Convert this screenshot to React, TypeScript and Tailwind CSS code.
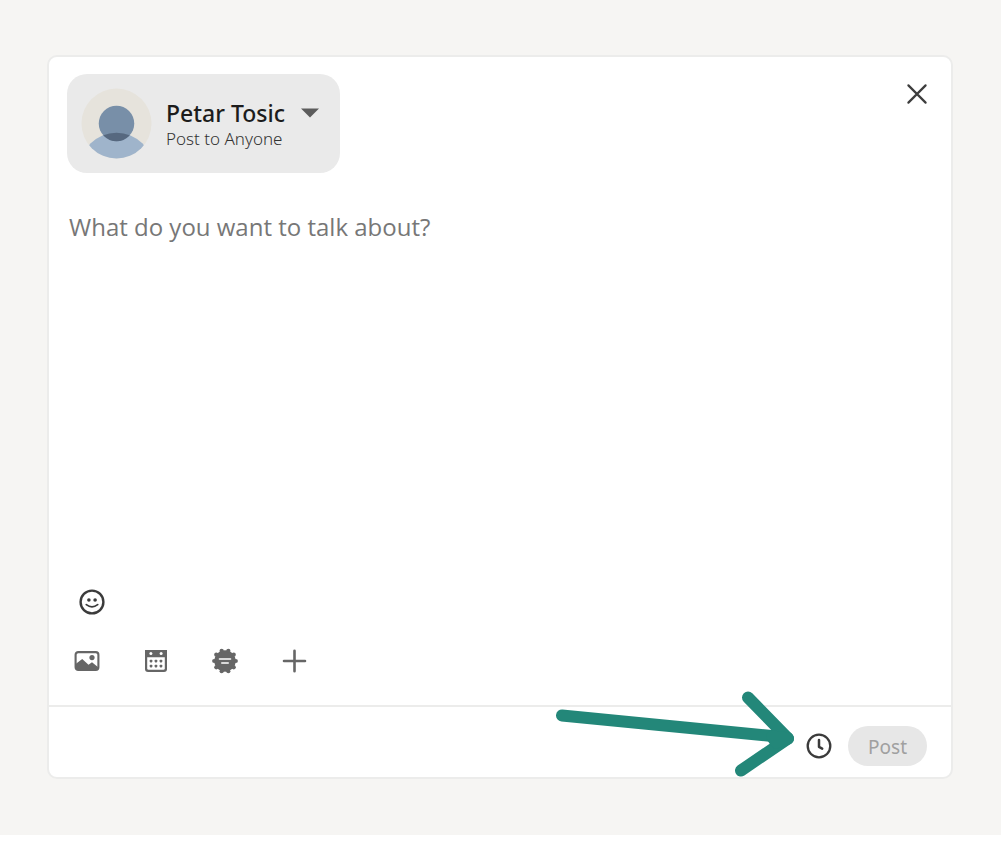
import { useState } from "react";

function Avatar() {
  return (
    <svg viewBox="0 0 70 70" className="size-[71px] shrink-0" aria-hidden="true">
      <defs>
        <clipPath id="avatar-round">
          <circle cx="35" cy="35" r="34.5" />
        </clipPath>
        <clipPath id="avatar-head">
          <circle cx="35" cy="35" r="17.5" />
        </clipPath>
      </defs>
      <g clipPath="url(#avatar-round)">
        <rect width="70" height="70" fill="#e6e3dc" />
        <circle cx="35" cy="80" r="36" fill="#9fb4cb" />
        <circle cx="35" cy="35" r="17.5" fill="#788fa8" />
        <circle cx="35" cy="80" r="36" fill="#56687f" clipPath="url(#avatar-head)" />
      </g>
    </svg>
  );
}

function SmileIcon() {
  return (
    <svg viewBox="0 0 26 26" className="size-[26px]" fill="none" stroke="#3b3b3b" aria-hidden="true">
      <circle cx="13" cy="13" r="11.4" strokeWidth="2.4" />
      <path d="M7.3 15.6q5.7 4.4 11.4 0" strokeWidth="1.7" strokeLinecap="round" />
      <circle cx="9.9" cy="11" r="1.8" fill="#3b3b3b" stroke="none" />
      <circle cx="16.1" cy="11" r="1.8" fill="#3b3b3b" stroke="none" />
    </svg>
  );
}

function PhotoIcon() {
  return (
    <svg viewBox="0 0 26 26" className="size-[26px]" aria-hidden="true">
      <rect x="1.6" y="4.1" width="22.8" height="17.8" rx="2.6" fill="none" stroke="#666" strokeWidth="2.1" />
      <path d="M2 15.8l6.2-4.8 6.300 5.800 3.500-2.600 6.200 5v2.400H2z" fill="#666" />
      <circle cx="18" cy="9.600" r="2.600" fill="#666" />
    </svg>
  );
}

function CalendarIcon() {
  return (
    <svg viewBox="0 0 26 26" className="size-[26px]" aria-hidden="true">
      <path d="M2 2h22v19a3 3 0 0 1-3 3H5a3 3 0 0 1-3-3z" fill="#666" />
      <path d="M4.200 9.200h17.600v11.200a1.400 1.400 0 0 1-1.400 1.400H5.600a1.400 1.400 0 0 1-1.400-1.400z" fill="#fff" />
      <circle cx="7.900" cy="5.500" r="1.500" fill="#fff" />
      <circle cx="18.100" cy="5.500" r="1.500" fill="#fff" />
      <g fill="#666">
        <rect x="6.700" y="11.700" width="2.700" height="2.700" rx=".8" />
        <rect x="11.600" y="11.700" width="2.700" height="2.700" rx=".8" />
        <rect x="16.600" y="11.700" width="2.700" height="2.700" rx=".8" />
        <rect x="6.700" y="16.700" width="2.700" height="2.700" rx=".8" />
        <rect x="11.600" y="16.700" width="2.700" height="2.700" rx=".8" />
        <rect x="16.600" y="16.700" width="2.700" height="2.700" rx=".8" />
      </g>
    </svg>
  );
}

const badgeTeeth = Array.from({ length: 10 }, (_, i) => (i * Math.PI) / 5);

function BadgeIcon() {
  return (
    <svg viewBox="0 0 26 26" className="size-[26px]" aria-hidden="true">
      <circle cx="13" cy="13" r="10.700" fill="#666" />
      {badgeTeeth.map((angle) => (
        <circle
          key={angle}
          cx={13 + 10.8 * Math.cos(angle)}
          cy={13 + 10.8 * Math.sin(angle)}
          r="2.100"
          fill="#666"
        />
      ))}
      <path d="M7.500 11h11" stroke="#fff" strokeWidth="1.600" strokeLinecap="round" />
      <path d="M9.800 15h6.400" stroke="#fff" strokeWidth="1.600" strokeLinecap="round" />
    </svg>
  );
}

function PlusIcon() {
  return (
    <svg viewBox="0 0 26 26" className="size-[26px]" aria-hidden="true">
      <path d="M13.500 2.700v20.600M3 13h21" stroke="#666" strokeWidth="2.600" strokeLinecap="round" />
    </svg>
  );
}

function CloseIcon() {
  return (
    <svg viewBox="0 0 26 26" className="size-[26px]" aria-hidden="true">
      <path d="M4.400 4.400l17.200 17.200M21.600 4.400L4.400 21.600" stroke="#3d3d3d" strokeWidth="2.200" strokeLinecap="round" />
    </svg>
  );
}

function ClockIcon() {
  return (
    <svg viewBox="0 0 26 26" className="size-[26px]" fill="none" stroke="#3b3b3b" aria-hidden="true">
      <circle cx="13" cy="13" r="11.300" strokeWidth="2.300" />
      <path d="M13 7v6.800l3.200 1.800" strokeWidth="2.500" strokeLinecap="round" strokeLinejoin="round" />
    </svg>
  );
}

function PointerArrow() {
  return (
    <svg
      viewBox="0 0 242 90"
      className="pointer-events-none absolute right-[155px] -top-[18px] h-[90px] w-[242px]"
      fill="none"
      stroke="#238779"
      strokeWidth="12"
      strokeLinecap="round"
      strokeLinejoin="round"
      aria-hidden="true"
    >
      <path d="M8 26.500L233 48.500" />
      <path d="M194 8.500l40 41L187 81.500" />
      <path d="M218 47.500l16 2-12 4z" />
    </svg>
  );
}

const attachments = [
  { label: "Add media", Icon: PhotoIcon },
  { label: "Create an event", Icon: CalendarIcon },
  { label: "Celebrate an occasion", Icon: BadgeIcon },
  { label: "More", Icon: PlusIcon },
];

export default function App() {
  const [text, setText] = useState("");

  return (
    <main className="mr-px bg-[#f6f5f3] pt-[55px] pr-12 pb-14 pl-[47px] font-['Noto_Sans','Open_Sans',sans-serif]">
      <section className="rounded-[10px] border-2 border-[#ececeb] bg-white" aria-label="Create a post">
        <header className="flex items-start justify-between pt-[17px] pr-[21px] pl-[18px]">
          <button
            type="button"
            className="flex items-center gap-[14px] rounded-[20px] bg-[#eaeaea] py-[14px] pr-[21px] pl-[14px] text-left"
          >
            <Avatar />
            <span className="flex flex-col pt-[2px]">
              <span className="flex items-center gap-4 text-[23px] leading-7 font-medium text-[#1c1c1c]">
                Petar Tosic
                <svg viewBox="0 0 18 10" className="h-[10px] w-[18px]" aria-hidden="true">
                  <path d="M0 .5h18L9 9.500z" fill="#5c5c5c" />
                </svg>
              </span>
              <span className="text-[17px] leading-6 font-light text-[#333]">Post to Anyone</span>
            </span>
          </button>
          <button type="button" aria-label="Close" className="mt-[7px]">
            <CloseIcon />
          </button>
        </header>

        <textarea
          aria-label="Post text"
          placeholder="What do you want to talk about?"
          value={text}
          onChange={(event) => setText(event.target.value)}
          className="mt-9 block h-[360px] w-full resize-none px-5 font-['Open_Sans',sans-serif] text-2xl leading-9 text-[#333] outline-none placeholder:text-[#777]"
        />

        <div className="mt-5 px-[30px]">
          <button type="button" aria-label="Add emoji" className="block">
            <SmileIcon />
          </button>
        </div>
        <div className="mt-[33px] flex gap-[43px] px-[25px] pb-[31px]">
          {attachments.map(({ label, Icon }) => (
            <button key={label} type="button" aria-label={label}>
              <Icon />
            </button>
          ))}
        </div>

        <footer className="relative flex items-center justify-end gap-4 border-t-2 border-[#ececeb] pt-[19px] pr-6 pb-[11px]">
          <PointerArrow />
          <button type="button" aria-label="Schedule post">
            <ClockIcon />
          </button>
          <button
            type="button"
            disabled
            className="h-10 rounded-full bg-[#e7e7e7] px-5 pt-[2px] text-[19px] leading-9 text-[#a0a0a0]"
          >
            Post
          </button>
        </footer>
      </section>
    </main>
  );
}
